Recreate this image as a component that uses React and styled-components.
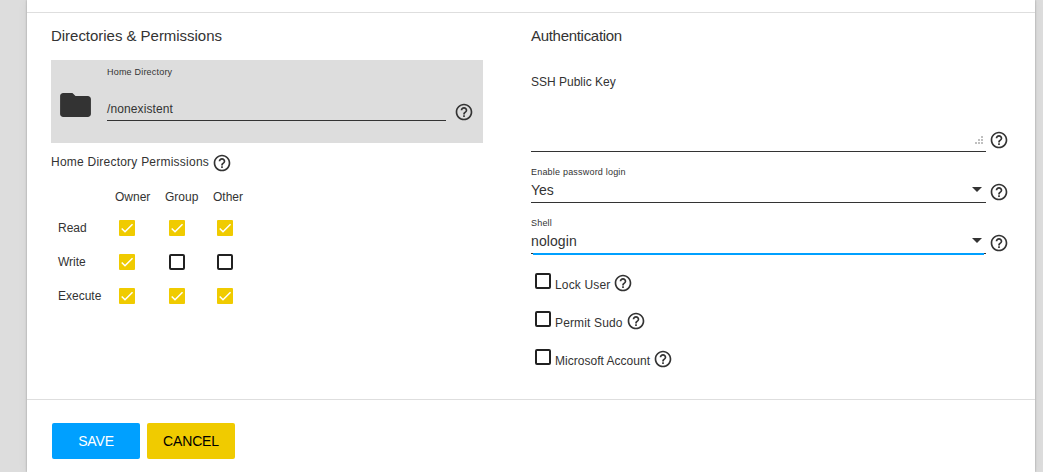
import React from "react";
import styled, { createGlobalStyle } from "styled-components";

const GlobalStyle = createGlobalStyle`
  * { box-sizing: border-box; }
  body {
    margin: 0;
    background: #dddddd;
    color: #333333;
    font: 12px/16px "Liberation Sans", Arial, sans-serif;
    overflow: hidden;
  }
`;

const Page = styled.main`
  height: 472px;
  padding: 0 8px 0 27px;
`;

const Card = styled.form`
  display: flow-root;
  height: 100%;
  background: #ffffff;
  box-shadow: 0 0 2px rgba(0, 0, 0, 0.3), 0 0 10px rgba(0, 0, 0, 0.06);
`;

const Columns = styled.div`
  display: grid;
  grid-template-columns: 432px 480px;
  column-gap: 48px;
  height: 387px;
  padding: 13px 24px 0;
  margin-top: 12px;
  border-top: 1px solid #dedede;
`;

const Column = styled.section`
  min-width: 0;
`;

const Title = styled.h2`
  margin: 0;
  height: 20px;
  font-size: 15px;
  line-height: 20px;
  font-weight: 400;
  letter-spacing: ${(p) => p.$spacing || "0"};
  white-space: nowrap;
`;

const Text = styled.span`
  letter-spacing: ${(p) => p.$spacing || "0"};
  white-space: nowrap;
`;

const Heading = styled(Text)`
  margin-top: 6px;
`;

const SmallLabel = styled.div`
  height: 12px;
  font-size: 9px;
  line-height: 12px;
  letter-spacing: 0.2px;
`;

const Explorer = styled.div`
  display: flex;
  height: 83px;
  margin-top: 14px;
  padding: 6px 8px 0 6px;
  background: #dddddd;
`;

const FolderSlot = styled.div`
  width: 50px;
  padding-top: 21px;
`;

const PathField = styled.div`
  width: 339px;
  height: 55px;
  border-bottom: 1px solid #333333;
`;

const PathValue = styled.div`
  margin-top: 23px;
  height: 16px;
  letter-spacing: 0.1px;
`;

const HelpSlot = styled.div`
  padding: ${(p) => p.$top}px 0 0 ${(p) => p.$left}px;
`;

const Svg = styled.svg`
  display: block;
  flex: none;
  fill: #333333;
`;

const PermissionsLabel = styled.div`
  display: flex;
  align-items: flex-start;
  gap: 3px;
  height: 34px;
  padding-top: 10px;
`;

const PermissionsText = styled(Text)`
  margin-top: 1px;
  letter-spacing: 0.23px;
`;

const Matrix = styled.div`
  display: grid;
  grid-template-columns: 57px 50px 48px 40px;
  grid-template-rows: 34px 34px 34px 34px;
  align-items: center;
  padding-left: 7px;
`;

const Cell = styled.div`
  padding-left: 4px;
`;

const Box = styled.span`
  display: flex;
  flex: none;
  width: 16px;
  height: 16px;
  border-radius: ${(p) => (p.$checked ? "1px" : "2px")};
  border: ${(p) => (p.$checked ? "0" : "2px solid #212121")};
  background: ${(p) => (p.$checked ? "#f0cb00" : "#ffffff")};
`;

const FieldRow = styled.div`
  display: flex;
  height: ${(p) => p.$height}px;
`;

const Textarea = styled.div`
  display: flex;
  flex-direction: column;
  justify-content: space-between;
  width: 455px;
  height: 106px;
  padding-top: 28px;
  border-bottom: 1px solid #333333;
`;

const Grip = styled(Svg)`
  align-self: flex-end;
  margin: 0 3px 7px 0;
  fill: #c0c0c0;
`;

const Select = styled.div`
  width: 455px;
  height: 37px;
  border-bottom: 1px solid #333333;
`;

const SelectValue = styled.div`
  display: flex;
  justify-content: space-between;
  height: 24px;
  padding-right: 4px;
  font-size: 14px;
  line-height: 24px;
  letter-spacing: ${(p) => p.$spacing || "0"};
`;

const Caret = styled.i`
  margin-top: 9px;
  width: 0;
  height: 0;
  border: 5px solid transparent;
  border-top-color: #333333;
  border-bottom: 0;
`;

const FocusBar = styled.div`
  height: 2px;
  margin: -1px 2px 0;
  background: #00a0ff;
`;

const Options = styled.div`
  display: grid;
  grid-auto-rows: 38px;
  padding: 9px 0 0 4px;
`;

const Option = styled.label`
  display: flex;
  align-items: flex-start;
  gap: 4px;
`;

const OptionText = styled.span`
  margin-top: 4px;
  letter-spacing: ${(p) => p.$spacing || "0"};
`;

const OptionHelp = styled.span`
  margin-left: -1px;
`;

const Actions = styled.footer`
  display: flex;
  gap: 7px;
  height: 73px;
  padding: 23px 25px 0;
  border-top: 1px solid #dedede;
`;

const Button = styled.button`
  width: 88px;
  height: 36px;
  border: 0;
  border-radius: 2px;
  padding: 0;
  font: 14px "Liberation Sans", Arial, sans-serif;
  letter-spacing: -0.15px;
  background: ${(p) => (p.$primary ? "#00a0ff" : "#f0cb00")};
  color: ${(p) => (p.$primary ? "#ffffff" : "#000000")};
`;

const HelpIcon = () => (
  <Svg width="20" height="20" viewBox="0 0 24 24">
    <path d="M11 18h2v-2h-2v2zm1-16C6.48 2 2 6.48 2 12s4.48 10 10 10 10-4.48 10-10S17.52 2 12 2zm0 18c-4.41 0-8-3.59-8-8s3.59-8 8-8 8 3.59 8 8-3.59 8-8 8zm0-14c-2.21 0-4 1.79-4 4h2c0-1.1.9-2 2-2s2 .9 2 2c0 2-3 1.75-3 5h2c0-2.25 3-2.5 3-5 0-2.21-1.79-4-4-4z" />
  </Svg>
);

const FolderIcon = () => (
  <Svg width="37" height="36" viewBox="0 0 24 24" preserveAspectRatio="none">
    <path d="M10 4H4c-1.1 0-1.99.9-1.99 2L2 18c0 1.1.9 2 2 2h16c1.1 0 2-.9 2-2V8c0-1.1-.9-2-2-2h-8l-2-2z" />
  </Svg>
);

const Checkbox = ({ checked }) => (
  <Box $checked={checked}>
    {checked && (
      <svg width="16" height="16" viewBox="0 0 24 24">
        <path d="M4.1 12.7 9 17.6 20.3 6.3" fill="none" stroke="#ffffff" strokeWidth="2.3" />
      </svg>
    )}
  </Box>
);

const heads = ["Owner", "Group", "Other"];
const permissions = [
  { name: "Read", values: [true, true, true] },
  { name: "Write", values: [true, false, false] },
  { name: "Execute", values: [true, true, true] },
];
const options = [
  { name: "Lock User", spacing: "0.15px" },
  { name: "Permit Sudo", spacing: "0.15px" },
  { name: "Microsoft Account", spacing: "0.02px" },
];

export default function App() {
  return (
    <Page>
      <GlobalStyle />
      <Card>
        <Columns>
          <Column>
            <Title $spacing="-0.03px">Directories &amp; Permissions</Title>
            <Explorer>
              <FolderSlot><FolderIcon /></FolderSlot>
              <PathField>
                <SmallLabel>Home Directory</SmallLabel>
                <PathValue>/nonexistent</PathValue>
              </PathField>
              <HelpSlot $top={36} $left={8}><HelpIcon /></HelpSlot>
            </Explorer>
            <PermissionsLabel>
              <PermissionsText>Home Directory Permissions</PermissionsText>
              <HelpIcon />
            </PermissionsLabel>
            <Matrix>
              <span />
              {heads.map((h) => <Heading key={h}>{h}</Heading>)}
              {permissions.map((row) => (
                <React.Fragment key={row.name}>
                  <Text>{row.name}</Text>
                  {row.values.map((v, i) => <Cell key={i}><Checkbox checked={v} /></Cell>)}
                </React.Fragment>
              ))}
            </Matrix>
          </Column>
          <Column>
            <Title $spacing="-0.3px">Authentication</Title>
            <FieldRow $height={120}>
              <Textarea>
                <Text>SSH Public Key</Text>
                <Grip width="8" height="8" viewBox="0 0 8 8">
                  <path d="M6 0h2v2H6zM3 3h2v2H3zM6 3h2v2H6zM0 6h2v2H0zM3 6h2v2H3zM6 6h2v2H6z" />
                </Grip>
              </Textarea>
              <HelpSlot $top={84} $left={2.5}><HelpIcon /></HelpSlot>
            </FieldRow>
            <FieldRow $height={51}>
              <Select>
                <SmallLabel>Enable password login</SmallLabel>
                <SelectValue>Yes<Caret /></SelectValue>
              </Select>
              <HelpSlot $top={16} $left={2.5}><HelpIcon /></HelpSlot>
            </FieldRow>
            <FieldRow $height={47}>
              <div>
                <Select>
                  <SmallLabel>Shell</SmallLabel>
                  <SelectValue $spacing="0.1px">nologin<Caret /></SelectValue>
                </Select>
                <FocusBar />
              </div>
              <HelpSlot $top={16} $left={2.5}><HelpIcon /></HelpSlot>
            </FieldRow>
            <Options>
              {options.map((o) => (
                <Option key={o.name}>
                  <Checkbox />
                  <OptionText $spacing={o.spacing}>{o.name}</OptionText>
                  <OptionHelp><HelpIcon /></OptionHelp>
                </Option>
              ))}
            </Options>
          </Column>
        </Columns>
        <Actions>
          <Button type="button" $primary>SAVE</Button>
          <Button type="button">CANCEL</Button>
        </Actions>
      </Card>
    </Page>
  );
}
